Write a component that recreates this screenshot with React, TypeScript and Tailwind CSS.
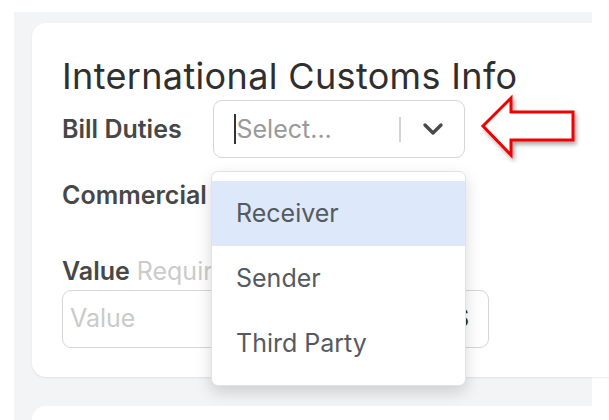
import React from "react";

const options = ["Receiver", "Sender", "Third Party"];

const RedArrow = () => (
  <svg
    className="absolute left-[478px] top-[92px]"
    width="104"
    height="72"
    viewBox="0 0 104 72"
  >
    <defs>
      <filter id="sh" x="-20%" y="-20%" width="140%" height="150%">
        <feDropShadow dx="2" dy="3" stdDeviation="2" floodColor="#000" floodOpacity="0.35" />
      </filter>
    </defs>
    <path
      d="M5 34 L33 6 L33 20 L95 20 L95 48 L33 48 L33 63 Z"
      fill="#fff"
      stroke="#f20000"
      strokeWidth="3"
      strokeLinejoin="miter"
      filter="url(#sh)"
    />
  </svg>
);

const App = () => {
  return (
    <div className="relative w-[609px] h-[420px] overflow-hidden bg-white font-['Inter',sans-serif]">
      <div className="ml-[14px] mt-[12px] w-[578px] h-[408px] bg-[#f3f4f6] pt-[11px] pl-[18px]">
        <div className="relative w-[600px] h-[354px] rounded-[14px] bg-white shadow-[0_1px_2px_rgba(0,0,0,0.08)] pl-[30px] pt-[31px]">
          <h1 className="text-[36px] leading-[44px] font-normal tracking-[0.35px] text-[#2f2f2f] whitespace-nowrap">
            International Customs Info
          </h1>

          {/* Bill Duties */}
          <div className="flex items-center mt-[2px]">
            <span className="w-[151px] text-[25px] leading-[30px] font-semibold text-[#474747]">
              Bill Duties
            </span>
            <div className="flex items-center w-[252px] h-[58px] rounded-[9px] border border-[#d6d6d6] bg-white pl-[20px] pr-[20px]">
              <span className="w-[1.5px] h-[30px] bg-[#333]" />
              <span className="ml-[1px] text-[25px] leading-[30px] text-[#9a9a9a]">Select...</span>
              <span className="ml-auto w-[2px] h-[25px] bg-[#d4d4d4]" />
              <svg
                className="ml-[21px]"
                width="22"
                height="14"
                viewBox="0 0 22 14"
                fill="none"
              >
                <path
                  d="M3 3 L11 11 L19 3"
                  stroke="#4a4a4a"
                  strokeWidth="3.4"
                  strokeLinecap="round"
                  strokeLinejoin="round"
                />
              </svg>
            </div>
          </div>

          {/* Commercial */}
          <div className="mt-[22px] h-[30px] flex items-center whitespace-nowrap">
            <span className="text-[25px] leading-[30px] font-semibold text-[#474747]">
              Commercial
            </span>
          </div>

          {/* Value */}
          <div className="mt-[46px] flex items-baseline gap-[7px] leading-[30px]">
            <span className="text-[25px] font-semibold text-[#474747]">Value</span>
            <span className="text-[25px] text-[#cbcbcb]">Required</span>
          </div>
          <div className="mt-[4px] flex items-center w-[427px] h-[58px] rounded-[9px] border border-[#d6d6d6] pl-[7px] pr-[19px]">
            <span className="text-[25px] text-[#cacaca]">Value</span>
            <span className="ml-auto text-[25px] font-semibold text-[#333]">$</span>
          </div>

          {/* Open dropdown menu */}
          <div className="absolute z-10 left-[179px] top-[148px] w-[255px] py-[9px] rounded-[7px] border border-[#e2e2e2] bg-white shadow-[0_6px_16px_rgba(0,0,0,0.16)]">
            {options.map((opt, i) => (
              <div
                key={opt}
                className={
                  "h-[65px] flex items-center pl-[24px] text-[25px] text-[#555a5f] " +
                  (i === 0 ? "bg-[#dde9fa]" : "")
                }
              >
                {opt}
              </div>
            ))}
          </div>
        </div>

        <div className="mt-[29px] w-[600px] h-[60px] rounded-[14px] bg-white" />
      </div>

      <RedArrow />
    </div>
  );
};

export default App;
